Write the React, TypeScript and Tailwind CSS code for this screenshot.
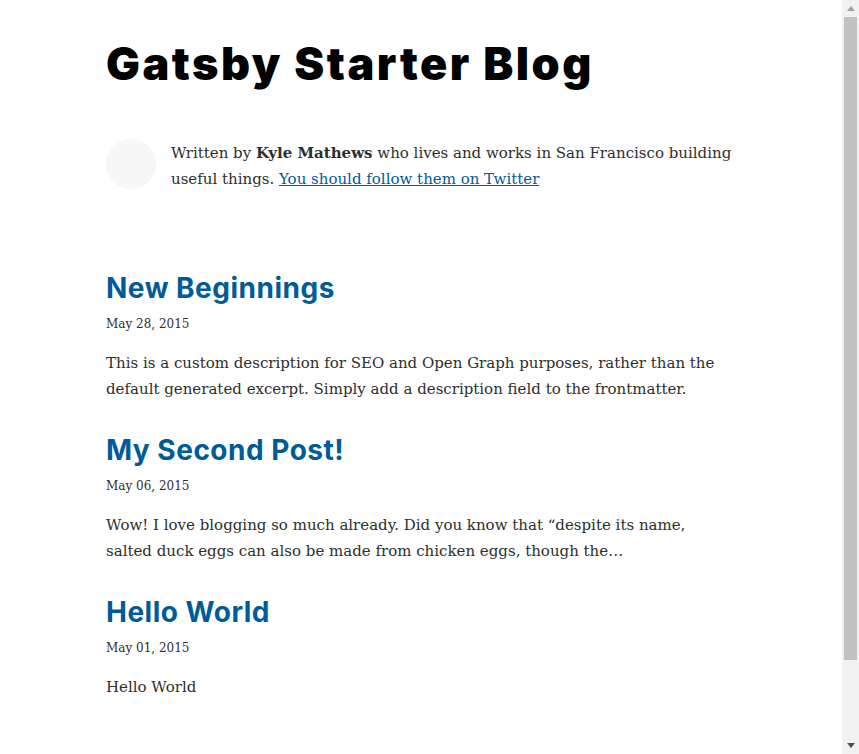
const posts = [
  {
    title: "New Beginnings",
    date: "May 28, 2015",
    excerpt:
      "This is a custom description for SEO and Open Graph purposes, rather than the default generated excerpt. Simply add a description field to the frontmatter.",
  },
  {
    title: "My Second Post!",
    date: "May 06, 2015",
    excerpt:
      "Wow! I love blogging so much already. Did you know that \u201cdespite its name, salted duck eggs can also be made from chicken eggs, though the\u2026",
  },
  {
    title: "Hello World",
    date: "May 01, 2015",
    excerpt: "Hello World",
  },
];

const Scrollbar = () => (
  <div className="w-[17px] flex-shrink-0 bg-[#f1f1f1] flex flex-col items-center">
    <div className="h-[17px] w-full flex items-center justify-center">
      <svg width="8" height="5" viewBox="0 0 8 5">
        <path d="M0 5 L4 0 L8 5 Z" fill="#a3a3a3" />
      </svg>
    </div>
    <div className="w-[13px] h-[643px] bg-[#c1c1c1]" />
    <div className="flex-1" />
    <div className="h-[17px] w-full flex items-center justify-center">
      <svg width="8" height="5" viewBox="0 0 8 5">
        <path d="M0 0 L8 0 L4 5 Z" fill="#505050" />
      </svg>
    </div>
  </div>
);

const App = () => {
  return (
    <div className="h-[754px] flex overflow-hidden bg-white text-[#2e2e2e] font-['DejaVu_Serif',serif]">
      <div className="flex-1 min-w-0">
        <div className="mx-auto max-w-[672px] px-[21px] pt-[40px]">
          {/* Header */}
          <h1 className="font-['Inter',sans-serif] font-black text-[45px] leading-[48px] tracking-[2.5px] text-black">
            Gatsby Starter Blog
          </h1>

          {/* Bio */}
          <div className="flex mt-[51px]">
            <div className="w-[50px] h-[50px] rounded-full bg-[#f7f7f7] mr-[15px] flex-shrink-0" />
            <p className="mt-[1px] text-[15px] leading-[26px]">
              Written by <strong>Kyle Mathews</strong> who lives and works in San
              Francisco building useful things.{" "}
              <a href="#" className="text-[#005b99] underline">
                You should follow them on Twitter
              </a>
            </p>
          </div>

          {/* Posts */}
          <div className="mt-[78px]">
            {posts.map((post) => (
              <article key={post.title} className="mb-[30px]">
                <h3 className="font-['Inter',sans-serif] font-bold text-[28px] leading-[36px] tracking-[0.5px] text-[#005b99]">
                  <a href="#">{post.title}</a>
                </h3>
                <small className="block mt-[8px] text-[12px] leading-[20px]">
                  {post.date}
                </small>
                <p className="mt-[16px] text-[15px] leading-[26px]">
                  {post.excerpt}
                </p>
              </article>
            ))}
          </div>
        </div>
      </div>
      <Scrollbar />
    </div>
  );
};

export default App;
